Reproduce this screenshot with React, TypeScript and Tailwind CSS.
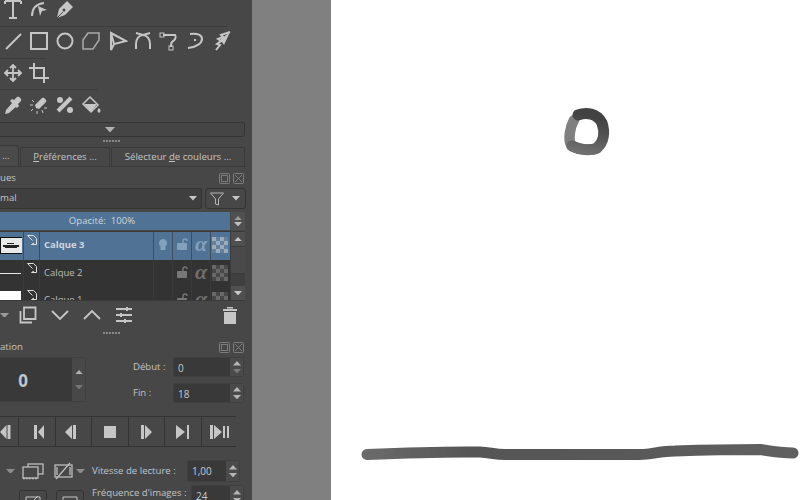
import type { ReactNode } from 'react';

const G = '#c6c6c6';

function Ico({ children, w = 22, h = 22, className = '' }: { children: ReactNode; w?: number; h?: number; className?: string }) {
  return (
    <svg width={w} height={h} viewBox={`0 0 ${w} ${h}`} fill="none" stroke={G} strokeWidth="2" className={`shrink-0 ${className}`}>
      {children}
    </svg>
  );
}

function Tri({ up = false, color = G, w = 8 }: { up?: boolean; color?: string; w?: number }) {
  const h = w * 0.55;
  return (
    <svg width={w} height={h} viewBox="0 0 8 4.4" className="shrink-0">
      <polygon points={up ? '4,0 8,4.4 0,4.4' : '0,0 8,0 4,4.4'} fill={color} />
    </svg>
  );
}

function Sep({ w }: { w: number }) {
  return <div className="h-px bg-[#3d3d3d]" style={{ width: w }} />;
}

function ToolRow({ children }: { children: ReactNode }) {
  return <div className="flex items-center gap-[4px] pl-[2px]">{children}</div>;
}

function Spin({ value, w, h = 20, dim = false }: { value: string; w: number; h?: number; dim?: boolean }) {
  return (
    <div className="flex shrink-0 items-stretch rounded-[3px] border border-[#3f3f3f] bg-[#393939]" style={{ width: w, height: h }}>
      <span className="flex-1 pl-[4px] text-[10px] leading-[20px] text-[#c0cdd8]">{value}</span>
      <div className="flex w-[13px] flex-col items-center justify-center gap-[3px] bg-[#4a4a4a]">
        <Tri up w={8} color="#b5b5b5" />
        <Tri w={8} color={dim ? '#7a7a7a' : '#b5b5b5'} />
      </div>
    </div>
  );
}

function DockButtons() {
  return (
    <div className="flex gap-[3px]">
      <svg width="11" height="11" viewBox="0 0 11 11" fill="none" stroke="#7c7c7c">
        <rect x=".5" y=".5" width="10" height="10" rx="1" />
        <rect x="2.5" y="2.5" width="6" height="6" />
      </svg>
      <svg width="11" height="11" viewBox="0 0 11 11" fill="none" stroke="#7c7c7c">
        <rect x=".5" y=".5" width="10" height="10" rx="1" />
        <path d="M2 2l7 7M9 2l-7 7" />
      </svg>
    </div>
  );
}

function Grip() {
  return (
    <div className="flex h-[5px] w-[222px] justify-center gap-px">
      {[0, 1, 2, 3, 4, 5].map((i) => (
        <span key={i} className="mt-[1px] h-[2px] w-[2px] bg-[#8a8a8a]" />
      ))}
    </div>
  );
}

function Checker({ dim = false }: { dim?: boolean }) {
  const a = dim ? '#686868' : '#9aabbd';
  const b = dim ? '#484848' : '#64809c';
  return (
    <svg width="16" height="16" viewBox="0 0 16 16" shapeRendering="crispEdges">
      <rect width="16" height="16" fill={b} />
      {[0, 1, 2, 3].map((y) =>
        [0, 1, 2, 3].map((x) => ((x + y) % 2 === 0 ? <rect key={`${x}${y}`} x={x * 4} y={y * 4} width="4" height="4" fill={a} /> : null))
      )}
    </svg>
  );
}

function Lock({ color }: { color: string }) {
  return (
    <svg width="12" height="12" viewBox="0 0 12 12" fill="none">
      <rect x="1" y="5" width="10" height="7" rx="1" fill={color} />
      <path d="M7 5V3a2 2 0 0 1 4 0" stroke={color} strokeWidth="1.4" />
    </svg>
  );
}

function Branch() {
  return (
    <svg width="12" height="12" viewBox="0 0 12 12" fill="none" stroke="#e0e0e0">
      <path d="M1.5 1.5h6l3 3v6h-5M1.5 1.5l5 5" />
      <path d="M8 9l-2.500 1.500" />
    </svg>
  );
}

function LayerRow({ name, active, h, preview, bulb }: { name: string; active?: boolean; h: number; preview: ReactNode; bulb?: boolean }) {
  const lock = active ? '#83a0bc' : '#777777';
  const alpha = active ? '#83a0bc' : '#6e6e6e';
  const line = active ? 'border-[#3e4d5c]' : 'border-[#3a3a3a]';
  return (
    <div className={`flex shrink-0 ${active ? 'bg-[#4f7295]' : 'bg-[#333333]'}`} style={{ height: h }}>
      <div className={`flex w-[24px] items-start border-r ${line}`}>{preview}</div>
      <div className={`w-[16px] border-r pl-[2px] pt-[2px] ${line}`}>
        <Branch />
      </div>
      <div className={`w-[114px] border-r pl-[4px] text-[9.5px] leading-[26px] ${line} ${active ? 'font-bold text-[#cfd6dd]' : 'text-[#bcbcbc]'}`}>
        {name}
      </div>
      <div className={`flex w-[19px] justify-center border-r pt-[7px] ${line}`}>
        {bulb && (
          <svg width="8" height="12" viewBox="0 0 8 12">
            <path d="M4 0a4 4 0 0 1 2.500 7.200V11h-5V7.200A4 4 0 0 1 4 0z" fill="#83a0bc" />
          </svg>
        )}
      </div>
      <div className={`flex w-[19px] justify-center border-r pt-[6px] ${line}`}>
        <Lock color={lock} />
      </div>
      <div className={`flex w-[19px] justify-center border-r text-[22px] font-bold italic leading-[24px] ${line}`} style={{ color: alpha, fontFamily: '"Liberation Serif", serif' }}>
        α
      </div>
      <div className="flex w-[18px] justify-center pt-[5px]">
        <Checker dim={!active} />
      </div>
    </div>
  );
}

function Transport() {
  const cells = [
    <path key="b" d="M12 4h3v14h-3zM22 4L16 11l6 7z" fill={G} stroke="none" transform="translate(-4 0)" />,
    <path key="c" d="M10 4L3 11l7 7zM11 4h3v14h-3z" fill={G} stroke="none" />,
    <path key="d" d="M5 5h12v12H5z" fill={G} stroke="none" />,
    <path key="e" d="M6 4h3v14H6zM10 4l7 7-7 7z" fill={G} stroke="none" />,
    <path key="f" d="M4 4l9 7-9 7zM15 4h2v14h-2z" fill={G} stroke="none" />,
    <path key="g" d="M1 4h3v14H1zM5 4l8 7-8 7zM14 5h2v12h-2zM18 5h2v12h-2z" fill={G} stroke="none" />,
  ];
  return (
    <div className="flex h-[31px] w-[236px] overflow-hidden border-y border-[#333333]">
      <div className="flex w-[19px] shrink-0 items-center border-r border-[#333333]">
        <svg width="11" height="14" viewBox="0 0 11 14" className="shrink-0">
          <path d="M6.500 0L0 7l6.500 7zM7.500 0h3v14h-3z" fill={G} />
        </svg>
      </div>
      {cells.map((c, i) => (
        <div key={i} className="flex w-[36.500px] shrink-0 items-center justify-center border-r border-[#333333] last:border-r-0">
          <Ico>{c}</Ico>
        </div>
      ))}
    </div>
  );
}

function FilmIcon({ slash = false }: { slash?: boolean }) {
  return (
    <svg width="22" height="18" viewBox="0 0 22 18" fill="none" stroke="#bdbdbd" strokeWidth="1.300">
      {slash ? (
        <>
          <rect x="2" y="3" width="17" height="12" />
          <path d="M3 17L17 1M4 5v8M17 5v8" />
        </>
      ) : (
        <>
          <rect x="6" y="2" width="15" height="10" />
          <rect x="1" y="5" width="15" height="11" fill="#474747" />
          <path d="M1 16.500h15" strokeDasharray="2 1" />
        </>
      )}
    </svg>
  );
}

export default function App() {
  return (
    <div className="flex h-[500px] w-[800px] overflow-hidden" style={{ fontFamily: '"Open Sans", sans-serif' }}>
      <div className="h-[500px] w-[252px] shrink-0 overflow-hidden bg-[#474747] text-[#c4c4c4]">
        {/* tool box */}
        <div className="flex h-[26px] items-start overflow-hidden">
          <div className="-mt-[2px]">
            <ToolRow>
              <Ico><path d="M3 3h16M11 3v16M7 20h8M3 3v3M19 3v3" /></Ico>
              <Ico><path d="M4 18c0-7 4-12 12-13" /><path d="M10 8l9 4-5 1-2 5z" fill={G} stroke="none" /></Ico>
              <Ico><path d="M3 20l2-9 8-8 6 6-8 8z" fill={G} stroke="none" /><path d="M3 20l6-6" stroke="#474747" strokeWidth="1" /><circle cx="10" cy="12" r="1.500" fill="#474747" stroke="none" /></Ico>
            </ToolRow>
          </div>
        </div>
        <Sep w={228} />
        <div className="mt-[3px] h-[28px]">
          <ToolRow>
            <Ico><path d="M4 19L19 4" /></Ico>
            <Ico><rect x="3" y="3" width="16" height="16" /></Ico>
            <Ico><circle cx="11" cy="11" r="7.500" /></Ico>
            <Ico><path d="M8 3h11v7l-6 9H3v-9z" strokeWidth="1.500" stroke="#aaaaaa" /></Ico>
            <Ico><path d="M5 3l15 8-12 3-3 6zM5 3l3 11" /></Ico>
            <Ico><path d="M4 19v-5c0-5 3-9 7-9s7 4 7 9v5M4 3l7 2 7-2" /></Ico>
            <Ico><path d="M5 5h12c2 2 0 5-3 7-1 1-1 3-1 5" /><rect x="2" y="3" width="4" height="4" strokeWidth="1" /><rect x="11" y="16" width="4" height="4" strokeWidth="1" /></Ico>
            <Ico><path d="M6 4c8-1 12 1 12 5 0 4-5 8-14 9M10 10h2" /></Ico>
            <Ico><path d="M20 2l-9 3 2 2-5 2 3 2-4 3 3 1-4 5" /><path d="M20 2l-6 13-2-3-3 1 2-4z" fill={G} stroke="none" /></Ico>
          </ToolRow>
        </div>
        <Sep w={46} />
        <div className="mt-[3px] h-[27px]">
          <ToolRow>
            <Ico><path d="M11 3v16M3 11h16M8 6l3-3 3 3M8 16l3 3 3-3M6 8l-3 3 3 3M16 8l3 3-3 3" strokeWidth="1.800" /></Ico>
            <Ico><path d="M6 1v15h15M1 6h15v15" /></Ico>
          </ToolRow>
        </div>
        <Sep w={98} />
        <div className="mt-[4px] h-[27px]">
          <ToolRow>
            <Ico><path d="M3 20l1-4 7-8 4 4-8 7zM10 5l2 1 3-3c2-1 5 2 4 4l-3 3 1 2-2 2-7-7z" fill={G} stroke="none" /></Ico>
            <Ico><path d="M8 14l-1-3 7-7c2-1 5 2 4 4l-7 7z" fill={G} stroke="none" /><path d="M2 11h3M4 6l2 2M3 17l2-2M9 20v-3M15 19l-1-3M19 14h-3" strokeWidth="1" /></Ico>
            <Ico><path d="M4 17L17 4" strokeWidth="4" /><circle cx="6" cy="6" r="3" fill={G} stroke="none" /><circle cx="16" cy="16" r="3" fill={G} stroke="none" /></Ico>
            <Ico><path d="M10 3l8 8-7 7-8-8z" strokeWidth="1.500" /><path d="M4 10h13l-6 8z" fill={G} stroke="none" /><path d="M19 14c2 2 2 4 0 5-2-1-2-3 0-5z" fill={G} stroke="none" /></Ico>
          </ToolRow>
        </div>
        <div className="ml-[-1px] mt-[1px] flex h-[15px] w-[246px] items-center rounded-r-[3px] border border-[#333333] bg-[#454545]">
          <span className="ml-[105px]"><Tri w={10} color="#b0b0b0" /></span>
        </div>
        <div className="mt-[1px] h-[7px] pt-[1px]"><Grip /></div>

        {/* tabs */}
        <div className="flex h-[21px] w-[245px] items-end gap-[1px] text-[9.6px]">
          <div className="flex h-[21px] w-[19px] items-center rounded-tr-[3px] border-r border-t border-[#3a3a3a] bg-[#4a4a4a] pl-[2px]">...</div>
          <div className="flex h-[19px] w-[90px] items-center justify-center rounded-t-[2px] border border-b-0 border-[#3a3a3a]">
            <span><u>P</u>références ...</span>
          </div>
          <div className="flex h-[19px] flex-1 items-center justify-center rounded-t-[2px] border border-b-0 border-[#3a3a3a]">
            <span>Sélecteur <u>d</u>e couleurs ...</span>
          </div>
        </div>

        {/* layers docker */}
        <div className="w-[246px] border-t border-[#3a3a3a]">
          <div className="flex h-[20px] items-center justify-between pr-[2px] pt-[2px] text-[9.6px]">
            <span>ues</span>
            <DockButtons />
          </div>
          <div className="mt-[1px] flex h-[21px] gap-[3px]">
            <div className="flex w-[202px] items-center justify-between rounded-r-[3px] border border-l-0 border-[#333333] bg-[#3f3f3f] pr-[4px] text-[9.6px]">
              <span>mal</span>
              <Tri w={8} />
            </div>
            <div className="flex w-[41px] items-center justify-between rounded-[3px] border border-[#333333] pl-[4px] pr-[5px]">
              <svg width="14" height="14" viewBox="0 0 14 14" fill="none" stroke="#b5b5b5"><path d="M.5 1h13L8.500 7v6l-3-1V7z" /></svg>
              <Tri w={8} />
            </div>
          </div>
          <div className="mt-[3px] flex h-[18px] gap-[1px]">
            <div className="flex w-[230px] items-center justify-center bg-[#4f7295] pr-[26px] text-[9.6px] text-[#d0d6dc]">Opacité:&nbsp; 100%</div>
            <div className="flex w-[14px] flex-col items-center justify-center gap-[2px] bg-[#505050]">
              <Tri up w={8} color="#9a9a9a" />
              <Tri w={8} color="#c0c0c0" />
            </div>
          </div>
          <div className="mt-[1px] flex h-[70px] w-[245px] border-y border-[#3a3a3a]">
            <div className="flex w-[230px] flex-col overflow-hidden">
              <LayerRow
                name="Calque 3"
                active
                bulb
                h={28}
                preview={
                  <svg width="22" height="18" viewBox="0 0 22 18" className="mt-[4px] shrink-0" shapeRendering="crispEdges">
                    <rect x="0" y="1" width="22" height="16" fill="#e8e8e8" stroke="#111" />
                    <path d="M3 9h16v2H3zM7 7h7v1H7zM5 11h12v1H5z" fill="#222" />
                  </svg>
                }
              />
              <LayerRow
                name="Calque 2"
                h={27}
                preview={<div className="mt-[13px] h-px w-[21px] bg-[#e8e8e8]" />}
              />
              <LayerRow
                name="Calque 1"
                h={27}
                preview={<div className="mt-[4px] h-[16px] w-[21px] bg-white" />}
              />
            </div>
            <div className="flex w-[15px] flex-col items-center border-l border-[#3a3a3a] bg-[#3f3f3f]">
              <div className="flex h-[14px] w-full items-center justify-center bg-[#505050]"><Tri up w={8} color="#c8c8c8" /></div>
              <div className="h-[28px] w-full border-y border-[#3a3a3a] bg-[#4a4a4a]" />
              <div className="flex-1" />
              <div className="flex h-[14px] w-full items-center justify-center bg-[#505050]"><Tri w={8} color="#c8c8c8" /></div>
            </div>
          </div>
          {/* layer actions */}
          <div className="flex h-[28px] items-center pr-[8px]">
            <Tri w={9} color="#9a9a9a" />
            <span className="ml-[10px]">
              <Ico w={18} h={18}><path d="M5 1.500h11.500v11.500H5zM1.500 5v11.500H13" strokeWidth="1.800" /></Ico>
            </span>
            <span className="ml-[14px]">
              <Ico w={18} h={18}><path d="M1 5l8 8 8-8" strokeWidth="1.800" /></Ico>
            </span>
            <span className="ml-[14px]">
              <Ico w={18} h={18}><path d="M1 13l8-8 8 8" strokeWidth="1.800" /></Ico>
            </span>
            <span className="ml-[14px]">
              <Ico w={18} h={18}><path d="M1 3h16M1 9h16M1 15h16" strokeWidth="1.800" /><path d="M12 1v4M6 7v4M10 13v4" strokeWidth="2" /></Ico>
            </span>
            <span className="ml-auto">
              <svg width="16" height="18" viewBox="0 0 16 18"><path d="M1 3h14v2H1zM5 1h6v1.500H5zM2 6h12v12H2z" fill={G} /></svg>
            </span>
          </div>
        </div>
        <div className="mt-[2px] h-[7px]"><Grip /></div>

        {/* animation docker */}
        <div className="w-[246px]">
          <div className="flex h-[18px] items-center justify-between pr-[2px] pt-[1px] text-[9.6px]">
            <span>ation</span>
            <DockButtons />
          </div>
          <div className="flex h-[46px] pt-px">
            <div className="flex w-[86px] rounded-r-[3px] border border-l-0 border-[#404040] bg-[#393939]">
              <span className="w-[46px] text-center text-[17px] font-bold leading-[46px] text-[#bcc6cf]">0</span>
              <span className="flex-1" />
              <div className="flex w-[13px] flex-col items-center justify-around bg-[#484848] py-[6px]">
                <Tri up w={8} color="#b0b0b0" />
                <Tri w={8} color="#777777" />
              </div>
            </div>
            <div className="ml-[47px] flex flex-col gap-[6px]">
              <div className="flex h-[20px] items-center gap-[7px] text-[9.6px]">
                <span className="w-[33px] whitespace-nowrap">Début :</span>
                <Spin value="0" w={71} dim />
              </div>
              <div className="flex h-[20px] items-center gap-[7px] text-[9.6px]">
                <span className="w-[33px] whitespace-nowrap">Fin :</span>
                <Spin value="18" w={71} />
              </div>
            </div>
          </div>
          <div className="mt-[14px]"><Transport /></div>
          <div className="mt-[12px] flex h-[24px] items-center">
            <div className="ml-[6px]"><Tri w={9} color="#8c8c8c" /></div>
            <div className="ml-[7px]"><FilmIcon /></div>
            <div className="ml-[9px]"><FilmIcon slash /></div>
            <div className="ml-[1px]"><Tri w={9} color="#8c8c8c" /></div>
            <span className="ml-[7px] w-[95px] whitespace-nowrap text-[9.6px] text-[#bcc6cf]">Vitesse de lecture :</span>
            <Spin value="1,00" w={53} h={22} />
          </div>
          <div className="mt-[2px] flex h-[24px] items-start">
            <div className="ml-[19px] mt-[5px] h-[20px] w-[28px] rounded-[3px] border border-[#333333]">
              <svg width="26" height="18" viewBox="0 0 26 18" fill="none" stroke={G}><path d="M6 6h14v8H6zM10 13l8-8" /></svg>
            </div>
            <div className="ml-[9px] mt-[5px] h-[20px] w-[28px] rounded-[3px] border border-[#333333]">
              <svg width="26" height="18" viewBox="0 0 26 18" fill="none" stroke={G}><path d="M6 6h14v8H6z" /></svg>
            </div>
            <span className="ml-[8px] mt-[1px] w-[99px] whitespace-nowrap text-[9.6px]">Fréquence d'images :</span>
            <Spin value="24" w={53} h={22} />
          </div>
        </div>
      </div>

      <div className="w-[79px] shrink-0 bg-[#808080]" />

      <div className="relative flex-1 bg-white">
        <svg width="469" height="500" viewBox="331 0 469 500" className="block">
          <defs>
            <filter id="soft"><feGaussianBlur stdDeviation="0.7" /></filter>
            <linearGradient id="ln" x1="0" x2="1" y1="0" y2="0">
              <stop offset="0" stopColor="#6a6a6a" />
              <stop offset="0.25" stopColor="#555555" />
              <stop offset="0.7" stopColor="#5a5a5a" />
              <stop offset="1" stopColor="#606060" />
            </linearGradient>
            <linearGradient id="rg" x1="0" x2="0.2" y1="1" y2="0">
              <stop offset="0" stopColor="#707070" />
              <stop offset="0.5" stopColor="#555555" />
              <stop offset="1" stopColor="#424242" />
            </linearGradient>
          </defs>
          <g filter="url(#soft)" fill="none" strokeLinecap="round" strokeLinejoin="round">
            <path d="M367 454.500C400 453 440 451.500 480 452C490 452.500 495 454.500 505 454.500L640 454.500C652 454.500 660 451 675 451C705 450 735 449.500 760 449.500C770 451 780 453 793 453" stroke="url(#ln)" strokeWidth="11" />
            <path d="M574 120C570 127 568 139 571 145C577 150 588 150 596 149" stroke="#808080" strokeWidth="10.500" />
            <path d="M578 115C586 112 597 113 602 123C605 132 604 142 597 148C590 151 580 150 572 146" stroke="url(#rg)" strokeWidth="11" />
          </g>
        </svg>
      </div>
    </div>
  );
}
